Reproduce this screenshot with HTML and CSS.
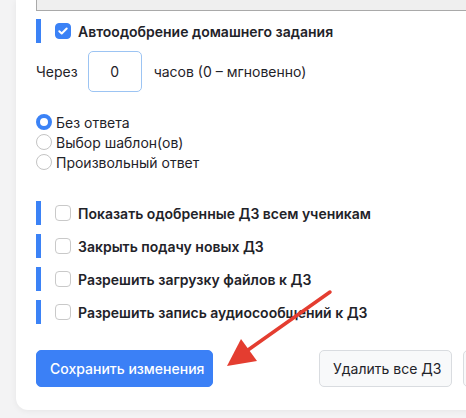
FILE: index.html
```html
<!DOCTYPE html>
<html lang="ru">
<head>
<meta charset="utf-8">
<link rel="stylesheet" href="styles.css">
</head>
<body>
<div class="card">
  <div class="textbox"></div>

  <label class="flag-row first">
    <span class="cb checked"><svg viewBox="0 0 16 16" width="16" height="16"><path d="M4.3 8.2l2.4 2.3 5-5" fill="none" stroke="#fff" stroke-width="2" stroke-linecap="round" stroke-linejoin="round"/></svg></span>
    <span class="flag-text">Автоодобрение домашнего задания</span>
  </label>

  <div class="hours-row">
    <span>Через</span>
    <span class="num-input">0</span>
    <span>часов (0 – мгновенно)</span>
  </div>

  <div class="radios">
    <label class="radio-row"><span class="rb on"></span>Без ответа</label>
    <label class="radio-row"><span class="rb"></span>Выбор шаблон(ов)</label>
    <label class="radio-row"><span class="rb"></span>Произвольный ответ</label>
  </div>

  <div class="flags">
    <label class="flag-row"><span class="cb"></span><span class="flag-text">Показать одобренные ДЗ всем ученикам</span></label>
    <label class="flag-row"><span class="cb"></span><span class="flag-text">Закрыть подачу новых ДЗ</span></label>
    <label class="flag-row"><span class="cb"></span><span class="flag-text">Разрешить загрузку файлов к ДЗ</span></label>
    <label class="flag-row"><span class="cb"></span><span class="flag-text">Разрешить запись аудиосообщений к ДЗ</span></label>
  </div>

  <div class="actions">
    <button class="btn primary">Сохранить изменения</button>
    <button class="btn light push">Удалить все ДЗ</button>
    <button class="btn light more" aria-label="Ещё"></button>
  </div>
</div>

<svg class="arrow" width="466" height="418" viewBox="0 0 466 418">
  <line x1="330" y1="292" x2="248" y2="350" stroke="#e43d30" stroke-width="3.5" stroke-linecap="round"/>
  <polygon points="227,366 241,339 257,361" fill="#e43d30"/>
</svg>
</body>
</html>
```
FILE: styles.css
```css
* { box-sizing: border-box; }
html, body { margin: 0; padding: 0; }
body {
  width: 466px;
  height: 418px;
  overflow: hidden;
  background: #f3f3f4;
  font-family: Inter, "Noto Sans", sans-serif;
  color: #1f2329;
  position: relative;
}
.card {
  margin-left: 16px;
  width: 560px;
  height: 410px;
  background: #fff;
  border-radius: 0 0 12px 12px;
  box-shadow: 0 1px 6px rgba(0,0,0,0.06);
  padding: 0 20px 22px;
}
.textbox {
  height: 11px;
  background: #efefef;
  border-left: 1px solid #a9a9a9;
  border-bottom: 1px solid #a9a9a9;
}
.flag-row {
  display: flex;
  align-items: center;
  height: 24px;
  border-left: 5px solid #3b82f6;
  padding-left: 14px;
  gap: 7px;
}
.flag-row.first { margin-top: 8px; }
.flag-text {
  font-size: 14px;
  font-weight: 600;
  color: #1f2329;
}
.cb {
  width: 16px;
  height: 16px;
  border: 1px solid #c9c9c9;
  border-radius: 4px;
  background: #fff;
  flex: none;
  display: block;
}
.cb.checked {
  background: #3b82f6;
  border-color: #3b82f6;
}
.cb.checked svg { display: block; margin: -1px; }
.hours-row {
  display: flex;
  align-items: center;
  margin-top: 8px;
  font-size: 14px;
  color: #1f2329;
}
.num-input {
  width: 54px;
  height: 41px;
  border: 1px solid #9cc4f3;
  border-radius: 5px;
  display: flex;
  align-items: center;
  justify-content: center;
  margin: 0 12px 0 10px;
  font-size: 14px;
}
.radios { margin-top: 20px; }
.radio-row {
  display: flex;
  align-items: center;
  height: 20px;
  font-size: 14px;
  gap: 4px;
  color: #1f2329;
}
.rb {
  width: 16px;
  height: 16px;
  border-radius: 50%;
  border: 1px solid #c4c4c4;
  background: #fff;
  flex: none;
}
.rb.on {
  border: 4px solid #3b82f6;
}
.flags {
  margin-top: 29px;
  display: flex;
  flex-direction: column;
  gap: 9px;
}
.actions {
  display: flex;
  gap: 11px;
  margin-top: 26px;
}
.btn {
  height: 37px;
  border-radius: 5px;
  font-family: inherit;
  font-size: 14px;
  padding: 0 13px;
  cursor: pointer;
  white-space: nowrap;
}
.btn.primary {
  width: 177px;
  background: #3b80f6;
  border: 1px solid #3b80f6;
  color: #fff;
  font-weight: 500;
}
.btn.light {
  background: #f8f9fa;
  border: 1px solid #d9dce0;
  color: #1f2329;
}
.btn.push { margin-left: 95px; width: 133px; }
.btn.more { width: 60px; }
.arrow {
  position: absolute;
  left: 0;
  top: 0;
  pointer-events: none;
}
```
